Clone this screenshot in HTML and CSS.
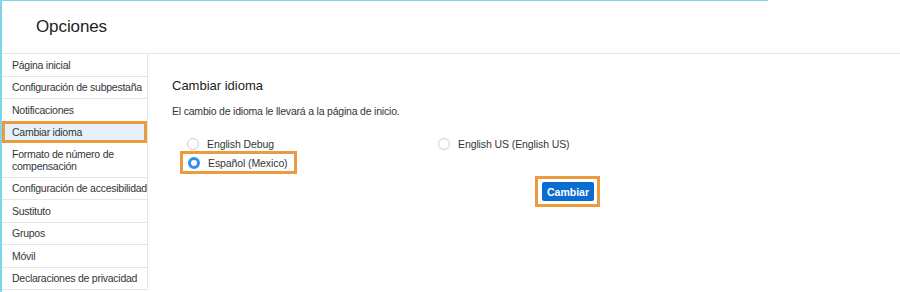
FILE: index.html
```html
<!DOCTYPE html>
<html>
<head>
  <title>Opciones</title>
  <link rel="stylesheet" href="styles.css">
</head>
<body>
  <div class="topline"></div>
  <header class="header">
    <h1>Opciones</h1>
  </header>

  <div class="main">
    <ul class="sidebar">
      <li>Página inicial</li>
      <li>Configuración de subpestaña</li>
      <li>Notificaciones</li>
      <li class="active">Cambiar idioma</li>
      <li>Formato de número de<br>compensación</li>
      <li>Configuración de accesibilidad</li>
      <li>Sustituto</li>
      <li>Grupos</li>
      <li>Móvil</li>
      <li>Declaraciones de privacidad</li>
    </ul>

    <section class="content">
      <h2>Cambiar idioma</h2>
      <p class="note">El cambio de idioma le llevará a la página de inicio.</p>

      <form class="langs">
        <label class="lang"><span class="radio"></span>English Debug</label>
        <label class="lang"><span class="radio"></span>English US (English US)</label>
        <label class="lang marked"><span class="radio checked"></span>Español (Mexico)</label>
      </form>

      <div class="actions">
        <div class="marked-btn">
          <button type="button">Cambiar</button>
        </div>
      </div>
    </section>
  </div>
</body>
</html>
```

FILE: styles.css
```css
* { box-sizing: border-box; margin: 0; padding: 0; }
body {
  font-family: 'Liberation Sans', Arial, sans-serif;
  background: #fff;
  color: #32363a;
  width: 900px;
  height: 292px;
  overflow: hidden;
  border-left: 2px solid #80d4e8;
}

.topline {
  width: 766px;
  height: 1px;
  background: #80d4e8;
}

.header {
  height: 53px;
  border-bottom: 1px solid #e6e6e6;
  padding: 16px 0 0 34px;
}

.header h1 {
  font-size: 17px;
  font-weight: normal;
  color: #222;
  letter-spacing: -0.1px;
}

.main {
  display: flex;
}

.sidebar {
  list-style: none;
  width: 146px;
  border-right: 1px solid #e6e6e6;
  font-size: 10.5px;
  letter-spacing: -0.25px;
  white-space: nowrap;
}

.sidebar li {
  padding: 4.75px 0 4.75px 10px;
  line-height: 12px;
  border-bottom: 1px solid #e6e6e6;
}

.sidebar li.active {
  background: #e6f2fa;
  border: 3px solid #eb9b3e;
  padding: 2.25px 0 2.25px 7px;
  margin-top: -1px;
}

.content {
  flex: 1;
  padding: 24px 0 0 24px;
}

.content h2 {
  font-size: 13px;
  font-weight: normal;
  color: #222;
  margin-bottom: 12px;
}

.note {
  font-size: 10.5px;
  letter-spacing: -0.2px;
  margin-bottom: 18px;
}

.langs {
  display: grid;
  grid-template-columns: 251px 1fr;
  font-size: 10.5px;
  letter-spacing: -0.1px;
}

.lang {
  display: flex;
  align-items: center;
  height: 18px;
  padding-left: 15px;
}

.lang.marked {
  justify-self: start;
  border: 3px solid #eb9b3e;
  height: 23px;
  padding: 0 6px 0 5px;
  margin-left: 8px;
  margin-top: -2px;
}

.radio {
  width: 12px;
  height: 12px;
  border: 1px solid #cfcfcf;
  border-radius: 50%;
  margin-right: 8px;
  background: #fff;
}

.radio.checked {
  border: 3.5px solid #2f8ef0;
  background: #fff;
}

.actions {
  padding: 2px 0 0 363px;
}

.marked-btn {
  display: inline-block;
  border: 3px solid #eb9b3e;
  padding: 3px 3px 3px 4px;
}

button {
  display: block;
  background-color: #0a6ed1;
  color: #fff;
  border: none;
  border-radius: 2px;
  width: 52px;
  height: 19px;
  font-family: 'Liberation Sans', Arial, sans-serif;
  font-size: 10.5px;
  font-weight: bold;
}
```
